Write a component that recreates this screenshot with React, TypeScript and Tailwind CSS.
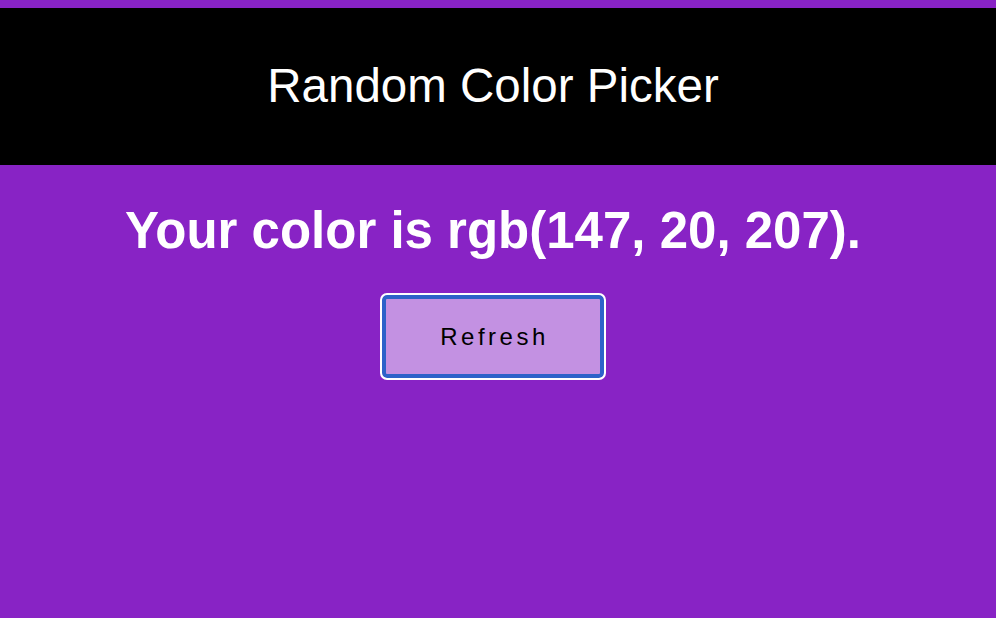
export default function App() {
  return (
    <div className="min-h-screen w-full bg-[#8823c5] pt-2" style={{ fontFamily: '"Liberation Sans", Arial, sans-serif' }}>
      <header className="flex h-[157px] items-center justify-center bg-black pb-[2px] pr-[10px]">
        <h1 className="text-[47.5px] leading-none text-white">Random Color Picker</h1>
      </header>
      <h2 className="mt-[40px] pr-[10px] text-center text-[51px] font-bold leading-none text-white">
        Your color is rgb(147, 20, 207).
      </h2>
      <div className="mt-[37px] flex justify-center pr-[10px]">
        <button
          type="button"
          className="flex h-[87px] w-[226px] items-center justify-center rounded-[7px] border-2 border-white bg-[#c391e2] pl-[3px] text-[24px] tracking-[3.5px] text-black shadow-[inset_0_0_0_4px_#2d62c9]"
        >
          Refresh
        </button>
      </div>
    </div>
  );
}
